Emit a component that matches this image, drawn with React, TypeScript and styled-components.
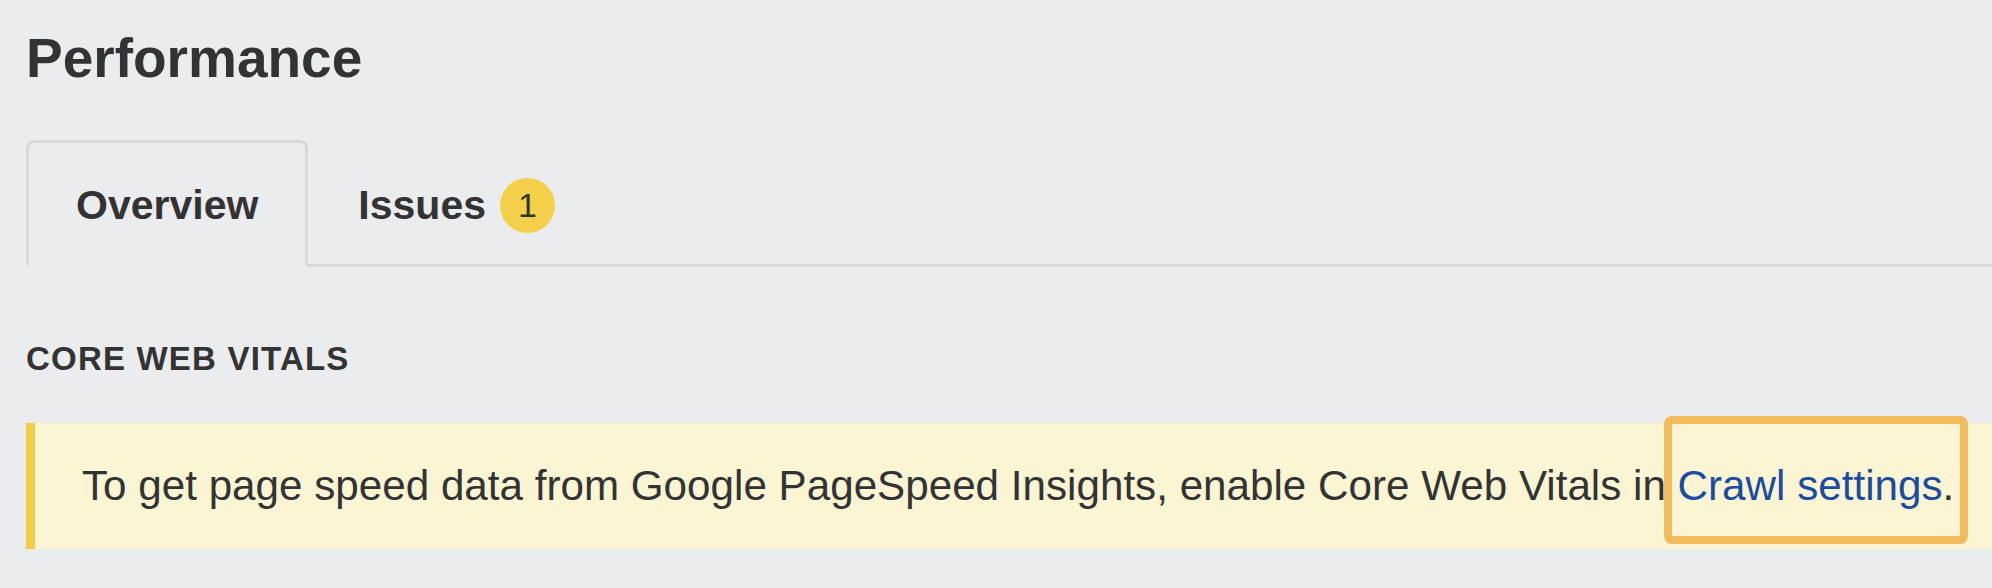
import styled, { createGlobalStyle } from 'styled-components';

const GlobalStyle = createGlobalStyle`
    html, body {
        margin: 0;
        padding: 0;
        background: #ebecee;
    }
    body {
        font-family: 'Liberation Sans', Arial, Helvetica, sans-serif;
        color: #333333;
    }
`;

const tabs = [
    { label: 'Overview', active: true },
    { label: 'Issues', count: 1 },
];

const App = () => {
    return (
        <>
            <GlobalStyle />
            <Page>
                <Title>Performance</Title>
                <TabBar>
                    {tabs.map((tab) => (
                        <Tab key={tab.label} $active={!!tab.active}>
                            {tab.label}
                            {tab.count !== undefined && <Badge>{tab.count}</Badge>}
                        </Tab>
                    ))}
                </TabBar>
                <SectionHeading>Core Web Vitals</SectionHeading>
                <Notice>
                    <p>
                        To get page speed data from Google PageSpeed Insights, enable Core Web Vitals in{' '}
                        <Highlight>
                            <a href='#crawl-settings'>Crawl settings</a>.
                        </Highlight>
                    </p>
                </Notice>
            </Page>
        </>
    );
};

const Page = styled.main`
    display: flex;
    flex-direction: column;
    min-height: 588px;
    padding: 31px 0 0 26px;
    box-sizing: border-box;
`;

const Title = styled.h1`
    margin: 0;
    font-size: 55px;
    line-height: 1;
    font-weight: 700;
    color: #333333;
`;

const TabBar = styled.nav`
    display: flex;
    align-items: flex-end;
    margin-top: 54px;
    border-bottom: 3px solid #d6d8db;
`;

const Tab = styled.div<{ $active: boolean }>`
    display: flex;
    align-items: center;
    gap: 14px;
    height: 118px;
    padding: 3px 47px 0;
    margin-bottom: -3px;
    box-sizing: content-box;
    font-size: 41px;
    line-height: 1;
    font-weight: 700;
    color: #333333;
    border: 3px solid ${({ $active }) => ($active ? '#d6d8db' : 'transparent')};
    border-bottom-color: ${({ $active }) => ($active ? '#ebecee' : 'transparent')};
    border-radius: 8px 8px 0 0;
    cursor: pointer;
`;

const Badge = styled.span`
    display: inline-flex;
    align-items: center;
    justify-content: center;
    width: 55px;
    height: 55px;
    border-radius: 50%;
    background: #f4d04a;
    font-size: 34px;
    font-weight: 400;
    color: #333333;
`;

const SectionHeading = styled.h2`
    margin: 75px 0 0;
    font-size: 33px;
    line-height: 1;
    font-weight: 700;
    letter-spacing: 1.2px;
    text-transform: uppercase;
    color: #333333;
`;

const Notice = styled.div`
    display: flex;
    align-items: center;
    height: 126px;
    margin-top: 48px;
    padding-left: 47px;
    background: #fbf5d4;
    border-left: 9px solid #f3cd48;

    p {
        margin: 0;
        font-size: 42.2px;
        line-height: 1;
        color: #333333;
        white-space: nowrap;
    }
`;

const Highlight = styled.span`
    position: relative;

    a {
        color: #1c4c9f;
        text-decoration: none;
    }

    &::after {
        content: '';
        position: absolute;
        top: -46px;
        bottom: -35px;
        left: -14px;
        right: -14px;
        border: 8px solid #f2bb5b;
        border-radius: 8px;
        pointer-events: none;
    }
`;

export default App;
